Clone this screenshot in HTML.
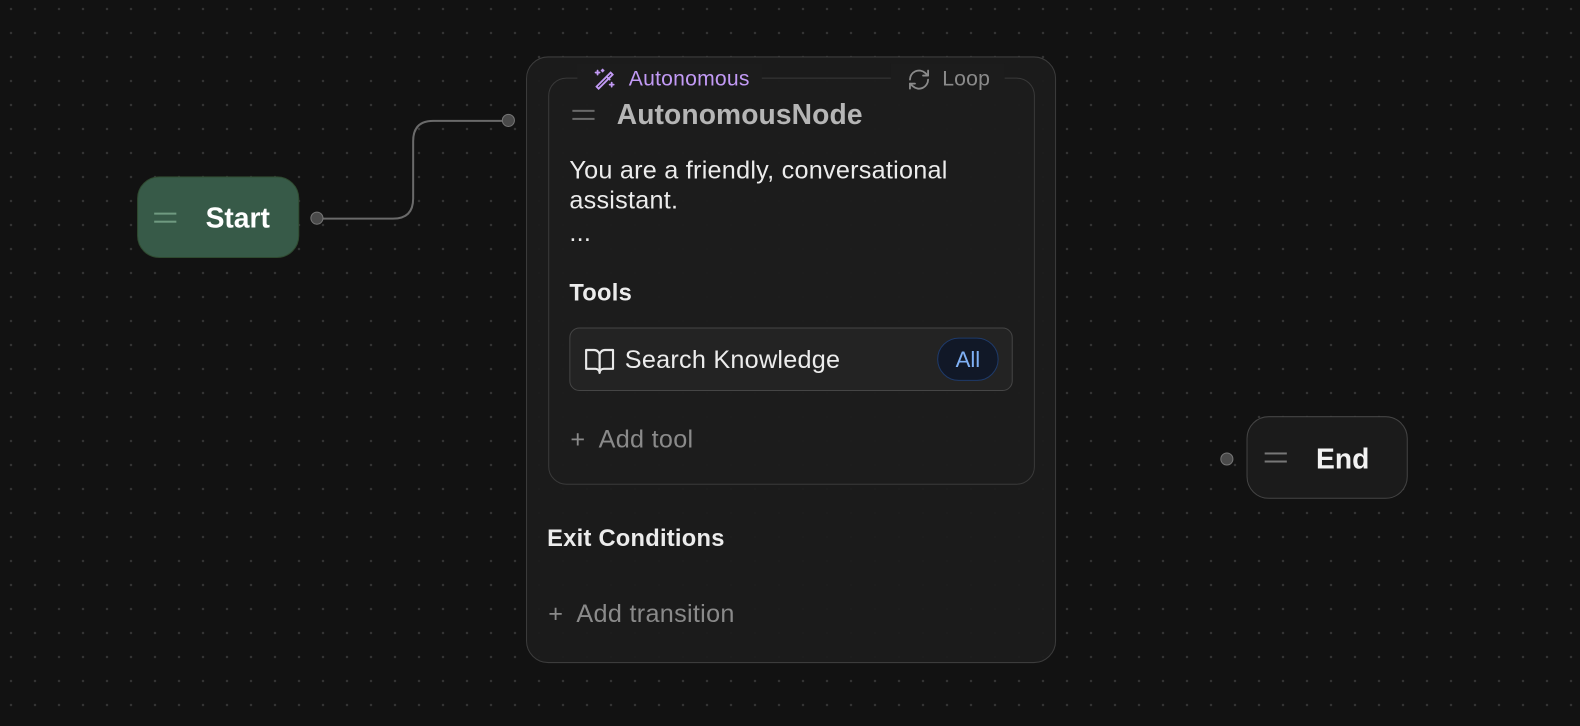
<!DOCTYPE html>
<html><head><meta charset="utf-8"><style>
*{margin:0;padding:0;box-sizing:border-box}
body{width:1580px;height:720px;overflow:hidden;background:#121212;font-family:"Liberation Sans",sans-serif;position:relative;
background-image:radial-gradient(circle,#333 1.1px,transparent 1.4px);background-size:24px 24px;background-position:-1px -3px}
#w{position:absolute;left:0;top:0;width:1580px;height:720px;transform:scale(1.0077);transform-origin:0 0}
.a{position:absolute}
.outer{left:522px;top:56px;width:526px;height:602px;border:1.5px solid #3c3c3c;border-radius:22px;background:rgba(28,28,28,0.93)}
.inner{left:544px;top:77px;width:483px;height:404px;border:1.5px solid #3a3a3a;border-radius:18px;background:rgba(30,30,30,0.6)}
.badge{height:32px;background:#1c1c1c;display:flex;align-items:center;font-size:21px;letter-spacing:0.2px}
.t{color:#ececec;font-size:25px;letter-spacing:0.25px}
.grip{width:22px;height:10px;border-top:2px solid currentColor;border-bottom:2px solid currentColor}
.h{width:13px;height:13px;border-radius:50%;background:#4a4a4a;border:1.5px solid #777}
</style></head><body><div id="w">
<svg class="a" style="left:0;top:0" width="1580" height="720"><path d="M315 217 H390 Q410 217 410 197 V140 Q410 120 430 120 H505" fill="none" stroke="#6a6a6a" stroke-width="2"/></svg>
<div class="a h" style="left:308px;top:210px"></div>
<div class="a h" style="left:498px;top:113px"></div>
<div class="a h" style="left:1211px;top:449px"></div>

<div class="a" style="left:136px;top:175px;width:161px;height:81px;background:#375a48;border:1.5px solid #2f4a30;border-radius:22px"></div>
<div class="a grip" style="left:153px;top:211px;color:#6f9a80"></div>
<div class="a" style="left:204px;top:201px;font-size:28px;font-weight:bold;color:#fff">Start</div>

<div class="a" style="left:1237px;top:413px;width:160px;height:82px;background:#1b1b1b;border:1.5px solid #444;border-radius:22px"></div>
<div class="a grip" style="left:1255px;top:449px;color:#777"></div>
<div class="a" style="left:1306px;top:440px;font-size:28px;font-weight:bold;color:#f2f2f2">End</div>

<div class="a outer"></div>
<div class="a inner"></div>
<div class="a badge" style="left:573px;top:63px;width:183px;padding-left:15px;color:#c29af5">
<svg width="24" height="24" viewBox="0 0 24 24" fill="none" stroke="#c29af5" stroke-width="1.8" stroke-linecap="round"><path d="M4 21 L18 7 L20 9 L6 23 Z" transform="translate(0,-2)"/><path d="M15 10l2 2"/><path d="M5 3v4M3 5h4M19 15v4M17 17h4M10 2v2M9 3h2"/></svg>
<span style="margin-left:12px">Autonomous</span></div>
<div class="a badge" style="left:884px;top:63px;width:113px;padding-left:16px;color:#8a8a8a">
<svg width="24" height="24" viewBox="0 0 24 24" fill="none" stroke="#8a8a8a" stroke-width="1.8" stroke-linecap="round" stroke-linejoin="round"><path d="M3 12a9 9 0 0 1 15-6.7L21 8"/><path d="M21 3v5h-5"/><path d="M21 12a9 9 0 0 1-15 6.7L3 16"/><path d="M8 16H3v5"/></svg>
<span style="margin-left:11px">Loop</span></div>

<div class="a grip" style="left:568px;top:109px;color:#6a6a6a"></div>
<div class="a" style="left:612px;top:98px;font-size:28px;font-weight:bold;color:#b5b5b5;letter-spacing:0.1px">AutonomousNode</div>
<div class="a t" style="left:565px;top:154px;line-height:30px">You are a friendly, conversational<br>assistant.</div>
<div class="a t" style="left:565px;top:217px">...</div>
<div class="a t" style="left:565px;top:277px;font-weight:bold;font-size:23.5px">Tools</div>

<div class="a" style="left:565px;top:325px;width:440px;height:63px;border:1.5px solid #454545;border-radius:10px;background:#232323"></div>
<svg class="a" style="left:579px;top:342px" width="32" height="32" viewBox="0 0 24 24" fill="none" stroke="#e8e8e8" stroke-width="1.6" stroke-linejoin="round"><path d="M2 4h6a4 4 0 0 1 4 4v13a3 3 0 0 0-3-3H2z"/><path d="M22 4h-6a4 4 0 0 0-4 4v13a3 3 0 0 1 3-3h7z"/></svg>
<div class="a t" style="left:620px;top:343px">Search Knowledge</div>
<div class="a" style="left:930px;top:335px;width:61px;height:43px;border-radius:22px;background:#111827;border:1.5px solid #1e3a6a;color:#7fb0f5;font-size:22px;text-align:center;line-height:42px">All</div>

<div class="a" style="left:566px;top:422px;font-size:25px;color:#8a8a8a;letter-spacing:0.3px">+&nbsp; Add tool</div>
<div class="a t" style="left:543px;top:521px;font-weight:bold;font-size:23.5px">Exit Conditions</div>
<div class="a" style="left:544px;top:595px;font-size:25px;color:#8a8a8a;letter-spacing:0.3px">+&nbsp; Add transition</div>
</div></body></html>
